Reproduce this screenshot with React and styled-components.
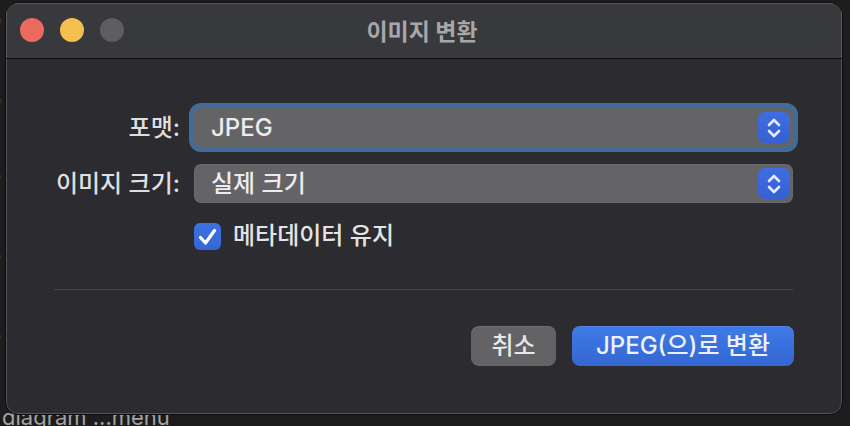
import styled, { createGlobalStyle } from "styled-components";

const Global = createGlobalStyle`
  html, body {
    margin: 0;
    padding: 0;
    background: #1d1d1e;
  }
  body {
    font-family: Inter, "Noto Sans CJK KR", sans-serif;
    -webkit-font-smoothing: antialiased;
  }
`

const Desktop = styled.div`
  position: relative;
  width: 850px;
  height: 426px;
  overflow: hidden;
  padding: 2px 0 0 5px;
  box-sizing: border-box;
`

const BackText = styled.span`
  position: absolute;
  color: #a4a4a4;
  font-size: 22px;
  line-height: 26px;
  white-space: nowrap;
`

const Window = styled.div`
  position: relative;
  z-index: 1;
  width: 838px;
  height: 413px;
  box-sizing: border-box;
  border: 1px solid #0b0b0c;
  border-radius: 13px;
  background: #2c2b30;
  box-shadow: inset 0 0 0 1px rgba(255, 255, 255, 0.2);
  overflow: hidden;
  display: flex;
  flex-direction: column;
`

const TitleBar = styled.header`
  position: relative;
  height: 55px;
  flex-shrink: 0;
  display: flex;
  align-items: center;
  justify-content: center;
  background: #38393d;
  border-bottom: 1px solid #0e0e10;
  box-shadow: inset 0 1px 0 rgba(255, 255, 255, 0.18), inset 1px 0 0 rgba(255, 255, 255, 0.18), inset -1px 0 0 rgba(255, 255, 255, 0.18);
`

const Lights = styled.div`
  position: absolute;
  left: 14px;
  top: 15px;
  display: flex;
  gap: 16px;
`

const Light = styled.span`
  width: 24px;
  height: 24px;
  border-radius: 50%;
  background: ${p => p.color};
`

const Title = styled.h1`
  margin: 0 0 2px -4px;
  font-size: 23px;
  font-weight: 700;
  color: #a7a7aa;
`

const Body = styled.div`
  padding: 49px 49px 0 48px;
  display: flex;
  flex-direction: column;
`

const Form = styled.div`
  display: grid;
  grid-template-columns: 126px 599px;
  column-gap: 14px;
  row-gap: 17px;
  align-items: center;
`

const Label = styled.label`
  text-align: right;
  font-size: 24px;
  font-weight: 500;
  line-height: 28px;
  color: #dfdfe1;
  white-space: nowrap;
`

const Select = styled.div`
  height: 39px;
  border-radius: 7px;
  background: #646466;
  display: flex;
  align-items: center;
  justify-content: space-between;
  padding: 0 3px 0 17px;
  box-sizing: border-box;
  box-shadow: ${p => p.focused ? "0 0 0 5px #416b9b" : "inset 0 0 0 1px rgba(255,255,255,0.04)"};
`

const Value = styled.span`
  font-size: 24px;
  font-weight: 500;
  line-height: 28px;
  color: #ececee;
`

const Stepper = styled.span`
  width: 32px;
  height: 31px;
  border-radius: 7px;
  background: linear-gradient(#3f6de2, #3560d2);
  display: flex;
  align-items: center;
  justify-content: center;
`

const CheckRow = styled.div`
  grid-column: 2;
  display: flex;
  align-items: center;
  gap: 12px;
  margin-top: 2px;
`

const Box = styled.span`
  width: 27px;
  height: 27px;
  border-radius: 6px;
  background: linear-gradient(#3e72e0, #3566d6);
  display: flex;
  align-items: center;
  justify-content: center;
`

const CheckText = styled.span`
  font-size: 24px;
  font-weight: 500;
  line-height: 28px;
  color: #e4e4e6;
`

const Divider = styled.hr`
  margin: 39px 0 0;
  border: 0;
  height: 1px;
  background: #48474c;
`

const Buttons = styled.div`
  display: flex;
  justify-content: flex-end;
  gap: 16px;
  margin-top: 36px;
  margin-right: -1px;
`

const Button = styled.button`
  height: 40px;
  width: ${p => p.primary ? "222px" : "85px"};
  padding: 0;
  border: 0;
  border-radius: 8px;
  font-family: inherit;
  font-size: 24px;
  font-weight: 500;
  line-height: 28px;
  color: ${p => p.primary ? "#eef1fb" : "#e8e8ea"};
  background: ${p => p.primary ? "linear-gradient(#3f7be5, #3467d2)" : "#636366"};
  box-shadow: inset 0 1px 0 rgba(255, 255, 255, 0.08);
`

const Chevrons = () => (
  <svg width="16" height="24" viewBox="0 0 16 24" fill="none" stroke="#e4eaff" strokeWidth="2.6" strokeLinecap="round" strokeLinejoin="round">
    <path d="M3 9l5-5 5 5" />
    <path d="M3 15l5 5 5-5" />
  </svg>
)

const Check = () => (
  <svg width="19" height="17" viewBox="0 0 19 17" fill="none" stroke="#ffffff" strokeWidth="3.2" strokeLinecap="round" strokeLinejoin="round">
    <path d="M2.5 9.5l5 5.5L16.5 2.5" />
  </svg>
)

export default function App() {
  return (
    <Desktop>
      <Global />
      <BackText style={{ left: 2, top: 404 }}>diagram ...menu</BackText>
      <BackText style={{ left: -12, top: 6 }}>o</BackText>
      <BackText style={{ left: -12, top: 86 }}>o</BackText>
      <BackText style={{ left: -12, top: 162 }}>o</BackText>
      <BackText style={{ left: -12, top: 242 }}>o</BackText>
      <BackText style={{ left: -12, top: 322 }}>o</BackText>
      <Window>
        <TitleBar>
          <Lights>
            <Light color="#ec6a5e" />
            <Light color="#f4bf4f" />
            <Light color="#5d5d62" />
          </Lights>
          <Title>이미지 변환</Title>
        </TitleBar>
        <Body>
          <Form>
            <Label>포맷:</Label>
            <Select focused>
              <Value>JPEG</Value>
              <Stepper><Chevrons /></Stepper>
            </Select>
            <Label>이미지 크기:</Label>
            <Select>
              <Value>실제 크기</Value>
              <Stepper><Chevrons /></Stepper>
            </Select>
            <CheckRow>
              <Box><Check /></Box>
              <CheckText>메타데이터 유지</CheckText>
            </CheckRow>
          </Form>
          <Divider />
          <Buttons>
            <Button>취소</Button>
            <Button primary>JPEG(으)로 변환</Button>
          </Buttons>
        </Body>
      </Window>
    </Desktop>
  )
}
